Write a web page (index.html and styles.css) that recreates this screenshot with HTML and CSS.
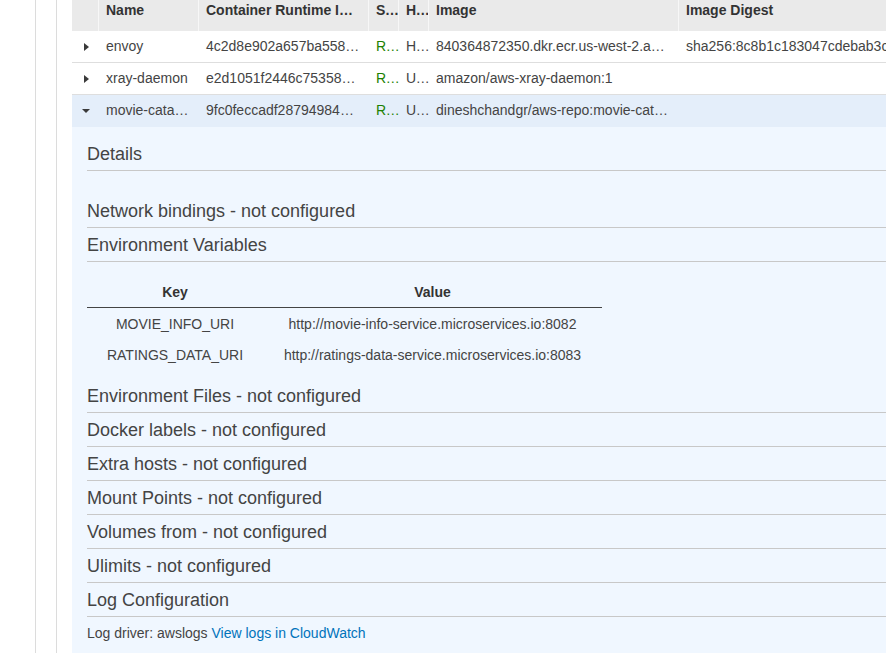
FILE: index.html
```html
<!DOCTYPE html>
<html lang="en">
<head>
<meta charset="utf-8">
<title>Containers</title>
<link rel="stylesheet" href="styles.css">
</head>
<body>
<div class="page">
  <div class="rail rail-a"></div>
  <div class="rail rail-b"></div>
  <main class="content">
    <div class="grid head">
      <div class="cell exp"></div>
      <div class="cell">Name</div>
      <div class="cell">Container Runtime I…</div>
      <div class="cell narrow">S…</div>
      <div class="cell narrow">H…</div>
      <div class="cell">Image</div>
      <div class="cell">Image Digest</div>
    </div>
    <div class="grid row">
      <div class="cell exp"><span class="tri tri-right"></span></div>
      <div class="cell">envoy</div>
      <div class="cell">4c2d8e902a657ba558…</div>
      <div class="cell narrow ok">R…</div>
      <div class="cell narrow">H…</div>
      <div class="cell">840364872350.dkr.ecr.us-west-2.a…</div>
      <div class="cell">sha256:8c8b1c183047cdebab3c</div>
    </div>
    <div class="grid row">
      <div class="cell exp"><span class="tri tri-right"></span></div>
      <div class="cell">xray-daemon</div>
      <div class="cell">e2d1051f2446c75358…</div>
      <div class="cell narrow ok">R…</div>
      <div class="cell narrow">U…</div>
      <div class="cell">amazon/aws-xray-daemon:1</div>
      <div class="cell"></div>
    </div>
    <div class="grid row selected">
      <div class="cell exp"><span class="tri tri-down"></span></div>
      <div class="cell">movie-cata…</div>
      <div class="cell">9fc0feccadf28794984…</div>
      <div class="cell narrow ok">R…</div>
      <div class="cell narrow">U…</div>
      <div class="cell">dineshchandgr/aws-repo:movie-cat…</div>
      <div class="cell"></div>
    </div>
    <section class="details">
      <h3 class="sec">Details</h3>
      <div class="sec-body empty"></div>
      <h3 class="sec">Network bindings - not configured</h3>
      <h3 class="sec">Environment Variables</h3>
      <div class="sec-body env">
        <table class="kv">
          <thead>
            <tr><th class="k">Key</th><th class="v">Value</th></tr>
          </thead>
          <tbody>
            <tr><td>MOVIE_INFO_URI</td><td>http://movie-info-service.microservices.io:8082</td></tr>
            <tr><td>RATINGS_DATA_URI</td><td>http://ratings-data-service.microservices.io:8083</td></tr>
          </tbody>
        </table>
      </div>
      <h3 class="sec">Environment Files - not configured</h3>
      <h3 class="sec">Docker labels - not configured</h3>
      <h3 class="sec">Extra hosts - not configured</h3>
      <h3 class="sec">Mount Points - not configured</h3>
      <h3 class="sec">Volumes from - not configured</h3>
      <h3 class="sec">Ulimits - not configured</h3>
      <h3 class="sec">Log Configuration</h3>
      <div class="sec-body log">Log driver: awslogs <a href="#" class="link">View logs in CloudWatch</a></div>
    </section>
  </main>
</div>
</body>
</html>
```
FILE: styles.css
```css
html, body {
  margin: 0;
  padding: 0;
  background: #fff;
}
body {
  font-family: "Liberation Sans", Arial, sans-serif;
  font-size: 14px;
  color: #444;
  height: 653px;
  overflow: hidden;
}
.page {
  display: flex;
  height: 653px;
}
.rail {
  flex: 0 0 auto;
  border-right: 1px solid #dcdcdc;
}
.rail-a { width: 35px; }
.rail-b { width: 20px; }
.content {
  flex: 0 0 866px;
  margin-left: 15px;
}
.grid {
  display: grid;
  grid-template-columns: 26px 100px 170px 30px 30px 250px 260px;
}
.cell {
  white-space: nowrap;
  overflow: hidden;
  padding-left: 8px;
}
.cell.narrow {
  overflow: visible;
  letter-spacing: -0.3px;
}
.cell.exp {
  padding-left: 0;
  display: flex;
  align-items: center;
  justify-content: center;
}
.head {
  background: #eaeaea;
  height: 31px;
}
.head .cell {
  font-weight: bold;
  color: #333;
  line-height: 20px;
  padding-left: 7px;
  border-left: 1px solid #f7f7f7;
}
.head .cell.exp {
  border-left: 0;
  padding-left: 0;
}
.row {
  height: 31px;
  border-bottom: 1px solid #dedede;
  line-height: 31px;
}
.row.selected {
  background: #e4eefa;
  border-bottom-color: #e4eefa;
}
.ok { color: #1d8102; }
.tri {
  display: block;
  width: 0;
  height: 0;
  margin-left: 2px;
}
.tri-right {
  border-top: 4px solid transparent;
  border-bottom: 4px solid transparent;
  border-left: 5px solid #3a3a3a;
}
.tri-down {
  border-left: 4.5px solid transparent;
  border-right: 4.5px solid transparent;
  border-top: 4.5px solid #3a3a3a;
}
.details {
  background: #f0f7ff;
  padding: 10px 0 20px 15px;
}
.sec {
  margin: 0;
  font-size: 18px;
  font-weight: normal;
  color: #444;
  height: 31px;
  padding-top: 2px;
  line-height: 31px;
  border-bottom: 1px solid #c8c8c8;
}
.sec-body.empty { height: 23px; }
.sec-body.env { padding: 15px 0 9px; }
.kv {
  width: 515px;
  border-collapse: separate;
  border-spacing: 0;
  font-size: 14px;
}
.kv th {
  height: 30px;
  padding: 0;
  font-weight: bold;
  color: #333;
  text-align: center;
  border-bottom: 1px solid #444;
}
.kv th.k { width: 176px; }
.kv td {
  height: 31px;
  padding: 0;
  text-align: center;
  color: #444;
}
.sec-body.log {
  padding-top: 6px;
  line-height: 20px;
}
.link {
  color: #0073bb;
  text-decoration: none;
}
```
